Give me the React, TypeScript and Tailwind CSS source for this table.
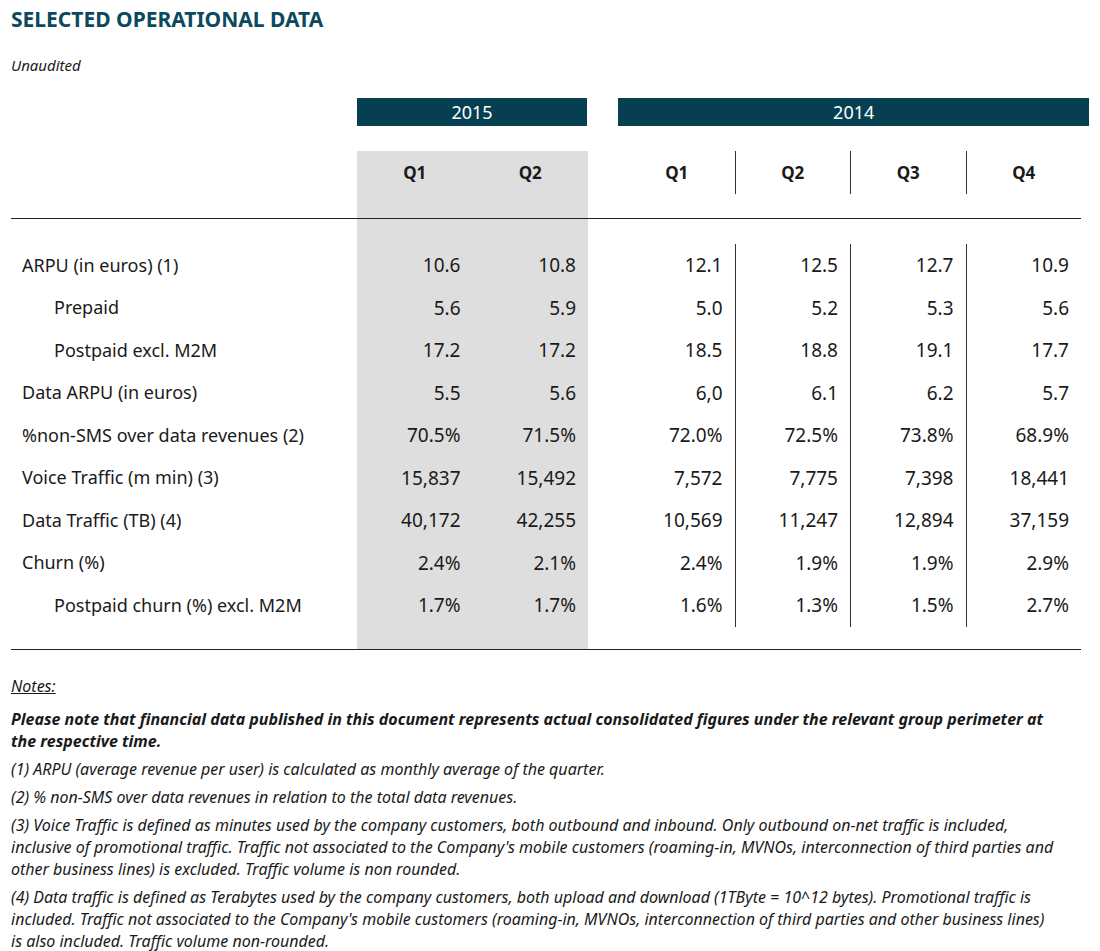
import React from 'react';

type Row = {
  label: string;
  indent?: boolean;
  values: string[];
};

const rows: Row[] = [
  { label: 'ARPU (in euros) (1)', values: ['10.6', '10.8', '12.1', '12.5', '12.7', '10.9'] },
  { label: 'Prepaid', indent: true, values: ['5.6', '5.9', '5.0', '5.2', '5.3', '5.6'] },
  { label: 'Postpaid excl. M2M', indent: true, values: ['17.2', '17.2', '18.5', '18.8', '19.1', '17.7'] },
  { label: 'Data ARPU (in euros)', values: ['5.5', '5.6', '6,0', '6.1', '6.2', '5.7'] },
  { label: '%non-SMS over data revenues (2)', values: ['70.5%', '71.5%', '72.0%', '72.5%', '73.8%', '68.9%'] },
  { label: 'Voice Traffic (m min) (3)', values: ['15,837', '15,492', '7,572', '7,775', '7,398', '18,441'] },
  { label: 'Data Traffic (TB) (4)', values: ['40,172', '42,255', '10,569', '11,247', '12,894', '37,159'] },
  { label: 'Churn (%)', values: ['2.4%', '2.1%', '2.4%', '1.9%', '1.9%', '2.9%'] },
  { label: 'Postpaid churn (%) excl. M2M', indent: true, values: ['1.7%', '1.7%', '1.6%', '1.3%', '1.5%', '2.7%'] },
];

const cols = 'grid grid-cols-[346px_115.5px_115.5px_31px_115.5px_115.5px_115.5px_115.5px]';

function Spacer({ h }: { h: string }) {
  return (
    <div className={cols}>
      <div className={h} />
      <div className={`${h} bg-[#dedede]`} />
      <div className={`${h} bg-[#dedede]`} />
    </div>
  );
}

export default function App() {
  return (
    <div className="w-[1100px] min-h-[951px] bg-white text-[#1a1a1a] px-[11px] pt-[5px] font-['Noto_Sans',sans-serif]">
      <h1 className="text-[21px] leading-[28px] font-bold text-[#0b4a5e]">SELECTED OPERATIONAL DATA</h1>
      <p className="mt-[22px] text-[15px] leading-[20px] italic">Unaudited</p>

      {/* year bars */}
      <div className="flex mt-[23px] h-[28px] text-white text-[18px]">
        <div className="w-[346px]" />
        <div className="w-[231px] bg-[#063f52] flex items-center justify-center">2015</div>
        <div className="w-[31px]" />
        <div className="w-[471px] bg-[#063f52] flex items-center justify-center">2014</div>
      </div>

      <div className="mt-[25px] w-[1070px]">
        {/* quarter headings */}
        <div className={`${cols} h-[43px] text-[17px] font-bold`}>
          <div />
          <div className="bg-[#dedede] flex items-center justify-center">Q1</div>
          <div className="bg-[#dedede] flex items-center justify-center">Q2</div>
          <div />
          <div className="flex items-center justify-center">Q1</div>
          <div className="flex items-center justify-center border-l border-[#333]">Q2</div>
          <div className="flex items-center justify-center border-l border-[#333]">Q3</div>
          <div className="flex items-center justify-center border-l border-[#333]">Q4</div>
        </div>
        <Spacer h="h-[24px]" />
        <div className="h-px bg-[#222]" />
        <Spacer h="h-[25px]" />

        {rows.map((r) => (
          <div key={r.label} className={`${cols} h-[42.5px] text-[19px]`}>
            <div className={`flex items-center text-[18px] ${r.indent ? 'pl-[43px]' : 'pl-[11px]'}`}>{r.label}</div>
            <div className="bg-[#dedede] flex items-center justify-end pr-[12px]">{r.values[0]}</div>
            <div className="bg-[#dedede] flex items-center justify-end pr-[12px]">{r.values[1]}</div>
            <div />
            <div className="flex items-center justify-end pr-[12px]">{r.values[2]}</div>
            <div className="flex items-center justify-end pr-[12px] border-l border-[#333]">{r.values[3]}</div>
            <div className="flex items-center justify-end pr-[12px] border-l border-[#333]">{r.values[4]}</div>
            <div className="flex items-center justify-end pr-[12px] border-l border-[#333]">{r.values[5]}</div>
          </div>
        ))}

        <Spacer h="h-[22px]" />
        <div className="h-px bg-[#222]" />
      </div>

      <div className="mt-[25px] text-[16px] leading-[22px] italic">
        <p className="underline">Notes:</p>
        <p className="mt-[11px] font-bold">
          Please note that financial data published in this document represents actual consolidated figures under the relevant group perimeter at
          <br />
          the respective time.
        </p>
        <p className="mt-[6px]">(1) ARPU (average revenue per user) is calculated as monthly average of the quarter.</p>
        <p className="mt-[6px]">(2) % non-SMS over data revenues in relation to the total data revenues.</p>
        <p className="mt-[6px]">
          (3) Voice Traffic is defined as minutes used by the company customers, both outbound and inbound. Only outbound on-net traffic is included,
          <br />
          inclusive of promotional traffic. Traffic not associated to the Company's mobile customers (roaming-in, MVNOs, interconnection of third parties and
          <br />
          other business lines) is excluded. Traffic volume is non rounded.
        </p>
        <p className="mt-[6px]">
          (4) Data traffic is defined as Terabytes used by the company customers, both upload and download (1TByte = 10^12 bytes). Promotional traffic is
          <br />
          included. Traffic not associated to the Company's mobile customers (roaming-in, MVNOs, interconnection of third parties and other business lines)
          <br />
          is also included. Traffic volume non-rounded.
        </p>
      </div>
    </div>
  );
}
